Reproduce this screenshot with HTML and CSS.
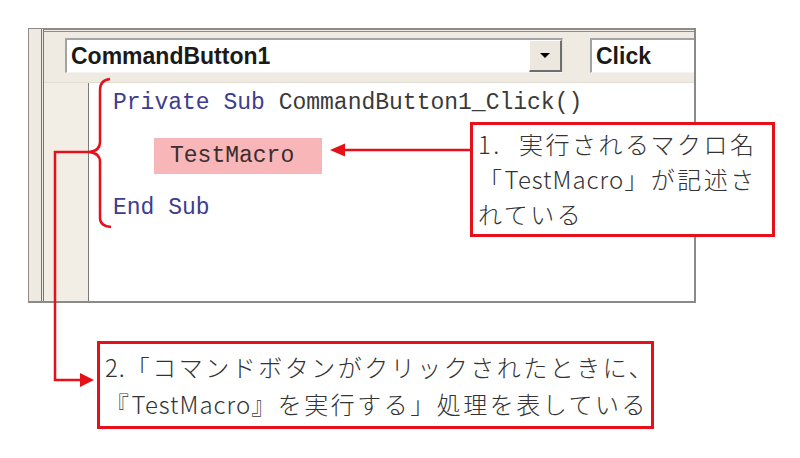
FILE: index.html
```html
<!DOCTYPE html>
<html lang="ja">
<head>
<meta charset="utf-8">
<title>CommandButton1_Click</title>
<link rel="stylesheet" href="styles.css">
</head>
<body>
<div class="page">
  <div class="window">
    <div class="strip"></div>
    <div class="main">
      <div class="header">
        <div class="combo combo-object">
          <span class="combo-text">CommandButton1</span>
          <span class="drop-btn"><span class="tri"></span></span>
        </div>
        <div class="combo combo-proc">
          <span class="combo-text">Click</span>
        </div>
      </div>
      <div class="body">
        <div class="gutter"></div>
        <div class="code">
          <div class="line"><span class="kw">Private Sub</span> CommandButton1_Click()</div>
          <div class="line indent"><span class="hl">TestMacro</span></div>
          <div class="line"><span class="kw">End Sub</span></div>
        </div>
      </div>
    </div>
  </div>

  <svg class="annot" width="800" height="458" viewBox="0 0 800 458">
    <path class="red-stroke" d="M110,79 Q100,80 100,90 L100,142 Q100,151 89,152 Q100,153 100,162 L100,218 Q100,226 111,227"/>
    <path class="red-stroke" d="M89,152 L55,152 L55,380 L82,380"/>
    <polygon class="red-fill" points="94,380 80,373 80,387"/>
    <path class="red-stroke" d="M470,150 L342,150"/>
    <polygon class="red-fill" points="330,150 345,143.5 345,156.5"/>
  </svg>

  <div class="callout callout-1">
    <div><span class="num">1.</span>実行されるマクロ名</div>
    <div>「<span class="lat">TestMacro</span>」が記述さ</div>
    <div>れている</div>
  </div>

  <div class="callout callout-2">
    <div><span class="num2">2.</span>「コマンドボタンがクリックされたときに、</div>
    <div>『<span class="lat">TestMacro</span>』を実行する」処理を表している</div>
  </div>
</div>
</body>
</html>
```

FILE: styles.css
```css
html, body {
  margin: 0;
  padding: 0;
  background: #ffffff;
}

.page {
  position: relative;
  width: 800px;
  height: 458px;
  overflow: hidden;
  padding: 28px 0 0 28px;
  box-sizing: border-box;
  background: #ffffff;
}

.window {
  width: 668px;
  height: 275px;
  box-sizing: border-box;
  display: flex;
  background: #efebe3;
  border-top: 1px solid #8c8c8c;
  border-left: 1px solid #8c8c8c;
  border-right: 2px solid #8a8a8a;
  border-bottom: 2px solid #8a8a8a;
  overflow: hidden;
}

.strip {
  width: 12px;
  flex: none;
  background: #eeeae1;
}

.main {
  flex: 1;
  min-width: 0;
  display: flex;
  flex-direction: column;
  border-left: 3px double #767676;
}

.header {
  flex: none;
  height: 54px;
  box-sizing: border-box;
  border-top: 3px double #8c8c8c;
  border-bottom: 1px solid #e2ddd3;
  display: flex;
  align-items: flex-start;
  gap: 27px;
  padding: 6px 0 0 21px;
  background: #efebe3;
}

.combo {
  flex: none;
  height: 35px;
  box-sizing: border-box;
  background: #ffffff;
  border-top: 2px solid #a3a3a3;
  border-left: 2px solid #a3a3a3;
  border-right: 1px solid #e6e2da;
  border-bottom: 1px solid #f7f5f1;
  display: flex;
  align-items: center;
  font-family: "Liberation Sans", Arial, sans-serif;
  font-weight: bold;
  font-size: 23px;
  color: #1a1a1a;
}

.combo-object {
  width: 498px;
  justify-content: space-between;
}

.combo-proc {
  width: 200px;
}

.combo-text {
  padding-left: 4px;
  line-height: 30px;
}

.drop-btn {
  width: 33px;
  height: 32px;
  box-sizing: border-box;
  align-self: flex-end;
  background: #ece8df;
  border-top: 1px solid #ffffff;
  border-left: 1px solid #ffffff;
  border-right: 2px solid #6e6e6e;
  border-bottom: 2px solid #6e6e6e;
  display: flex;
  align-items: center;
  justify-content: center;
}

.tri {
  width: 0;
  height: 0;
  border-left: 5px solid transparent;
  border-right: 5px solid transparent;
  border-top: 5px solid #000000;
}

.body {
  flex: 1;
  display: flex;
  min-height: 0;
}

.gutter {
  width: 44px;
  flex: none;
  background: #f2eee6;
  border-right: 1px solid #7a7a7a;
}

.code {
  flex: 1;
  background: #ffffff;
  padding: 6px 0 0 24px;
  font-family: "Liberation Mono", "DejaVu Sans Mono", monospace;
  font-size: 23px;
  color: #3a3a3a;
}

.line {
  white-space: pre;
  line-height: 28px;
  height: 28px;
  margin-bottom: 24.5px;
}

.line.indent {
  padding-left: 41px;
}

.kw {
  color: #3c3c90;
}

.hl {
  display: inline-block;
  background: #f8b6b8;
  color: #3a2e2e;
  padding: 4px 28px 4px 16px;
  margin-top: -4px;
  vertical-align: top;
}

.annot {
  position: absolute;
  left: 0;
  top: 0;
  pointer-events: none;
}

.red-stroke {
  fill: none;
  stroke: #e5101a;
  stroke-width: 2.5;
}

.red-fill {
  fill: #e5101a;
}

.callout {
  position: absolute;
  box-sizing: border-box;
  background: #ffffff;
  border: 3px solid #e5101a;
  font-family: "Noto Sans CJK JP", "Noto Sans", sans-serif;
  font-weight: 300;
  font-size: 24px;
  letter-spacing: 2.5px;
  color: #333333;
  white-space: nowrap;
}

.callout .lat {
  letter-spacing: 1px;
}

.callout .num {
  display: inline-block;
  width: 41px;
}

.callout .num2 {
  letter-spacing: 1px;
}

.callout-1 {
  left: 470px;
  top: 122px;
  width: 305px;
  height: 115px;
  padding: 1px 0 0 5px;
  line-height: 35px;
}

.callout-2 {
  left: 97px;
  top: 341px;
  width: 557px;
  height: 88px;
  padding: 4px 0 0 5px;
  line-height: 37px;
}
```
